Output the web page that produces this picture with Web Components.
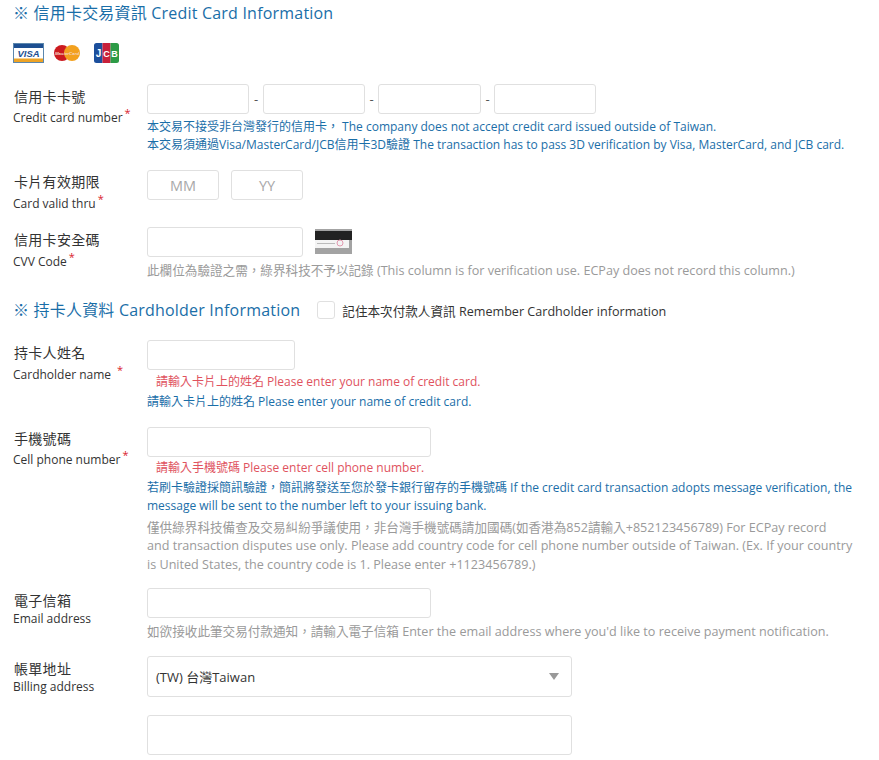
<!DOCTYPE html>
<html lang="zh-Hant">
<head>
<meta charset="utf-8">
<title>Credit Card Information</title>
<style>
  html, body { margin: 0; background: #fff; }
  body { font-family: "Open Sans", "Noto Sans CJK TC", sans-serif; color: #333; }
  pay-form { width: 879px; height: 760px; overflow: hidden; }
</style>
</head>
<body>
<pay-form></pay-form>

<template id="pay-form-tpl">
  <style>
    :host { display: block; padding-left: 13px; box-sizing: border-box; }
    .logos { margin-top: 17px; margin-bottom: 21px; }
    .head2 { margin-top: 16.5px; margin-bottom: 17px; display: flex; align-items: center; }
    .head2 check-box { margin-left: 17px; }
    .row { display: flex; align-items: center; }
    .row .dash { width: 13px; text-align: center; font-size: 13px; color: #555; }
    .strip { margin-left: 12px; margin-top: -1px; }
  </style>
  <section-title>※ 信用卡交易資訊 Credit Card Information</section-title>
  <card-logos class="logos"></card-logos>

  <form-field zh="信用卡卡號" en="Credit card number" gap="16">
    <div class="row">
      <text-box w="102"></text-box><span class="dash" style="width:14px">-</span>
      <text-box w="102"></text-box><span class="dash">-</span>
      <text-box w="103"></text-box><span class="dash">-</span>
      <text-box w="102"></text-box>
    </div>
    <field-note style="margin-top:4px">本交易不接受非台灣發行的信用卡， The company does not accept credit card issued outside of Taiwan.</field-note>
    <field-note style="margin-top:-1px">本交易須通過Visa/MasterCard/JCB信用卡3D驗證 The transaction has to pass 3D verification by Visa, MasterCard, and JCB card.</field-note>
  </form-field>

  <form-field zh="卡片有效期限" en="Card valid thru" gap="12" style="--label-top:2px;--en-line:23px">
    <div class="row" style="gap:12px">
      <text-box w="72" placeholder="MM"></text-box>
      <text-box w="72" placeholder="YY"></text-box>
    </div>
  </form-field>

  <form-field zh="信用卡安全碼" en="CVV Code" gap="0" style="--en-line:23px">
    <div class="row">
      <text-box w="156"></text-box>
      <svg class="strip" width="37" height="25" viewBox="0 0 37 25">
        <rect width="37" height="25" fill="#a3a3a3"/>
        <rect y="2" width="37" height="9" fill="#222"/>
        <rect y="11" width="34" height="8" fill="#f4f4f4"/>
        <rect x="2" y="14" width="18" height="1" fill="#bbb"/>
        <circle cx="25" cy="14" r="3" fill="none" stroke="#e29ab0" stroke-width="1"/>
      </svg>
    </div>
    <field-note kind="gray" style="margin-top:5px">此欄位為驗證之需，綠界科技不予以記錄 (This column is for verification use. ECPay does not record this column.)</field-note>
  </form-field>

  <div class="head2">
    <section-title>※ 持卡人資料 Cardholder Information</section-title>
    <check-box>記住本次付款人資訊 Remember Cardholder information</check-box>
  </div>

  <form-field zh="持卡人姓名" en="Cardholder name" spaced gap="16" style="--en-line:23px">
    <text-box w="148"></text-box>
    <field-note kind="error" style="margin-top:3px">請輸入卡片上的姓名 Please enter your name of credit card.</field-note>
    <field-note style="margin-top:1px">請輸入卡片上的姓名 Please enter your name of credit card.</field-note>
  </form-field>

  <form-field zh="手機號碼" en="Cell phone number" gap="14" style="--label-top:2px">
    <text-box w="284"></text-box>
    <field-note kind="error" style="margin-top:2px">請輸入手機號碼 Please enter cell phone number.</field-note>
    <field-note style="margin-top:1px">若刷卡驗證採簡訊驗證，簡訊將發送至您於發卡銀行留存的手機號碼 If the credit card transaction adopts message verification, the message will be sent to the number left to your issuing bank.</field-note>
    <field-note kind="gray" style="margin-top:3px">僅供綠界科技備查及交易糾紛爭議使用，非台灣手機號碼請加國碼(如香港為852請輸入+852123456789) For ECPay record<br>and transaction disputes use only. Please add country code for cell phone number outside of Taiwan. (Ex. If your country is United States, the country code is 1. Please enter +1123456789.)</field-note>
  </form-field>

  <form-field zh="電子信箱" en="Email address" nostar gap="14.5" style="--en-line:15px">
    <text-box w="284"></text-box>
    <field-note kind="gray" style="margin-top:5px">如欲接收此筆交易付款通知，請輸入電子信箱 Enter the email address where you'd like to receive payment notification.</field-note>
  </form-field>

  <form-field zh="帳單地址" en="Billing address" nostar style="--en-line:15px">
    <select-box>(TW) 台灣Taiwan</select-box>
    <text-box w="425" h="40" style="margin-top:18px"></text-box>
  </form-field>
</template>

<script>
  class PayForm extends HTMLElement {
    constructor() {
      super();
      var shadow = this.attachShadow({mode: 'open'});
      shadow.appendChild(document.getElementById('pay-form-tpl').content.cloneNode(true));
    }
  }

  class SectionTitle extends HTMLElement {
    constructor() {
      super();
      this.attachShadow({mode: 'open'}).innerHTML = `
        <style>
          :host { display: block; font-size: 16px; letter-spacing: .2px; line-height: 26px; color: #1a6ea8; white-space: nowrap; }
        </style>
        <slot></slot>`;
    }
  }

  class CardLogos extends HTMLElement {
    constructor() {
      super();
      this.attachShadow({mode: 'open'}).innerHTML = `
        <style>
          :host { display: flex; align-items: center; height: 20px; gap: 11px; }
          svg { display: block; }
        </style>
        <svg width="31" height="20" viewBox="0 0 31 20">
          <rect x=".5" y=".5" width="30" height="19" fill="#fff" stroke="#5c87ad"/>
          <rect x="1" y="1" width="29" height="4" fill="#1d4f91"/>
          <rect x="1" y="15.5" width="29" height="3.5" fill="#eda325"/>
          <text x="15.5" y="13.5" text-anchor="middle" font-family="Liberation Sans" font-size="9.5" font-weight="700" font-style="italic" fill="#1d4f91">VISA</text>
        </svg>
        <svg width="26" height="16" viewBox="0 0 26 16" style="margin-left:-1px">
          <circle cx="8" cy="8" r="8" fill="#cc1a1f"/>
          <circle cx="18" cy="8" r="8" fill="#f3a11f"/>
          <text x="13" y="9.5" text-anchor="middle" font-family="Liberation Sans" font-size="4.4" font-weight="700" font-style="italic" fill="#f6d5c0">MasterCard</text>
        </svg>
        <svg width="25" height="20" viewBox="0 0 25 20" style="margin-left:3px">
          <path d="M2.5 0H8.5V20H2.5A2.5 2.5 0 0 1 0 17.500V2.500A2.500 2.500 0 0 1 2.500 0Z" fill="#1c4f9c"/>
          <rect x="8.500" width="8" height="20" fill="#c8203a"/>
          <path d="M16.500 0H22.500A2.500 2.500 0 0 1 25 2.500V17.500A2.500 2.500 0 0 1 22.500 20H16.500Z" fill="#2d9b46"/>
          <text x="4.500" y="14" text-anchor="middle" font-family="Liberation Sans" font-size="10" font-weight="700" fill="#fff">J</text>
          <text x="12.500" y="13.500" text-anchor="middle" font-family="Liberation Sans" font-size="9" font-weight="700" fill="#fff">C</text>
          <text x="20.500" y="13.500" text-anchor="middle" font-family="Liberation Sans" font-size="9" font-weight="700" fill="#fff">B</text>
        </svg>`;
    }
  }

  class FormField extends HTMLElement {
    constructor() {
      super();
      this.attachShadow({mode: 'open'}).innerHTML = `
        <style>
          :host { display: flex; align-items: flex-start; }
          .label { width: 134px; flex: none; padding-top: var(--label-top, 3px); color: #333; }
          .zh { font-size: 14px; line-height: 20px; letter-spacing: .3px; padding-left: 1px; }
          .en { font-size: 12px; line-height: var(--en-line, 21px); white-space: nowrap; }
          .star { color: #d9232e; font-size: 11px; position: relative; top: -5px; margin-left: 2px; }
          .body { flex: 1; min-width: 0; padding-right: 26px; }
        </style>
        <div class="label">
          <div class="zh"></div>
          <div class="en"></div>
        </div>
        <div class="body"><slot></slot></div>`;
    }

    connectedCallback() {
      var root = this.shadowRoot;
      root.querySelector('.zh').textContent = this.getAttribute('zh');
      var en = root.querySelector('.en');
      en.textContent = this.getAttribute('en');
      if (!this.hasAttribute('nostar')) {
        var star = document.createElement('span');
        star.className = 'star';
        star.textContent = '*';
        if (this.hasAttribute('spaced')) star.style.marginLeft = '6px';
        en.appendChild(star);
      }
      this.style.marginBottom = (this.getAttribute('gap') || 0) + 'px';
    }
  }

  class TextBox extends HTMLElement {
    constructor() {
      super();
      this.attachShadow({mode: 'open'}).innerHTML = `
        <style>
          :host { display: block; flex: none; }
          input {
            display: block; box-sizing: border-box; width: 100%; height: 100%; margin: 0; padding: 0 8px;
            border: 1px solid #e0e0e0; border-radius: 3px; background: #fff; outline: none;
            font: 14.5px "Open Sans", "Noto Sans CJK TC", sans-serif; text-align: center; color: #333;
          }
          input::placeholder { color: #a8a8a8; opacity: 1; }
        </style>
        <input type="text">`;
    }

    connectedCallback() {
      this.style.width = this.getAttribute('w') + 'px';
      this.style.height = (this.getAttribute('h') || 30) + 'px';
      var ph = this.getAttribute('placeholder');
      if (ph) this.shadowRoot.querySelector('input').placeholder = ph;
    }
  }

  class FieldNote extends HTMLElement {
    constructor() {
      super();
      this.attachShadow({mode: 'open'}).innerHTML = `
        <style>
          :host { display: block; font-size: 12px; line-height: 18.5px; color: #1a6ea8; }
          :host([kind="gray"]) { color: #9a9a9a; font-size: 12.6px; }
          :host([kind="error"]) { color: #e0525e; padding-left: 9px; }
        </style>
        <slot></slot>`;
    }
  }

  class CheckBox extends HTMLElement {
    constructor() {
      super();
      this.attachShadow({mode: 'open'}).innerHTML = `
        <style>
          :host { display: flex; align-items: center; font-size: 12.6px; color: #333; white-space: nowrap; }
          i { width: 18px; height: 18px; box-sizing: border-box; border: 1px solid #e0e0e0; border-radius: 3px; margin-right: 7px; }
        </style>
        <i></i><slot></slot>`;
    }
  }

  class SelectBox extends HTMLElement {
    constructor() {
      super();
      this.attachShadow({mode: 'open'}).innerHTML = `
        <style>
          :host {
            display: flex; align-items: center; justify-content: space-between; box-sizing: border-box;
            width: 425px; height: 41px; padding: 0 12px 0 8px; border: 1px solid #e0e0e0; border-radius: 3px;
            font-size: 13px; color: #333;
          }
          i { width: 0; height: 0; border: 5px solid transparent; border-top: 7px solid #999; border-bottom: 0; }
        </style>
        <span><slot></slot></span><i></i>`;
    }
  }

  customElements.define('pay-form', PayForm);
  customElements.define('section-title', SectionTitle);
  customElements.define('card-logos', CardLogos);
  customElements.define('form-field', FormField);
  customElements.define('text-box', TextBox);
  customElements.define('field-note', FieldNote);
  customElements.define('check-box', CheckBox);
  customElements.define('select-box', SelectBox);
</script>
</body>
</html>
